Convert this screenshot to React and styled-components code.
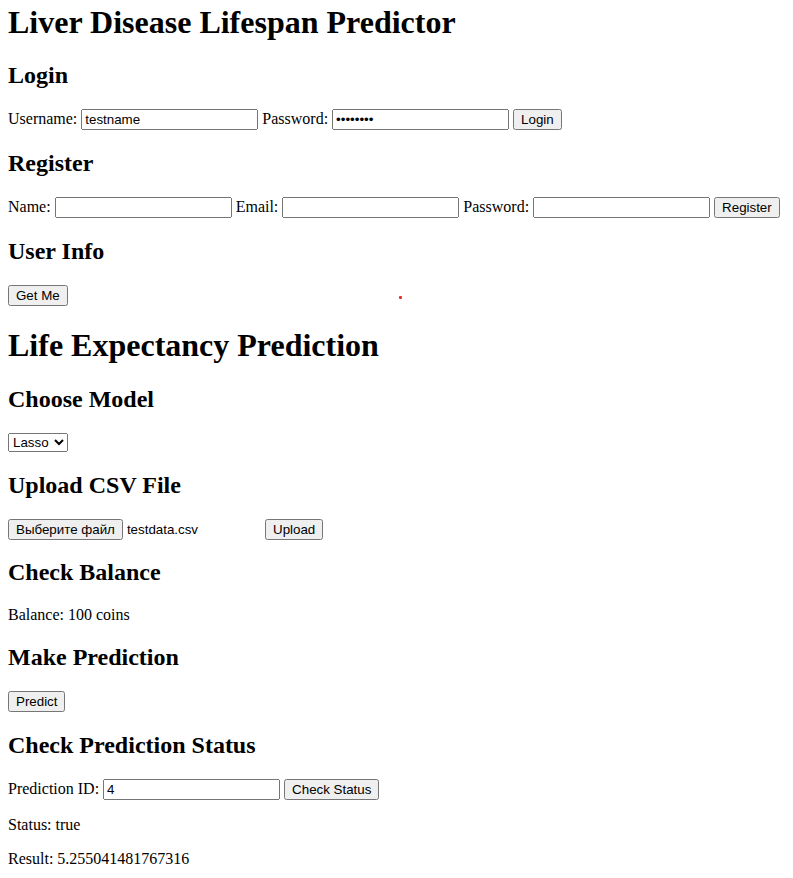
import React from 'react';
import styled, { createGlobalStyle } from 'styled-components';

const GlobalStyle = createGlobalStyle`
  body {
    margin: 8px;
    font-family: "Liberation Serif", "Times New Roman", serif;
    font-size: 16px;
    color: #000;
    background: #fff;
  }
`;

const Page = styled.div`
  position: relative;
`;

const Title = styled.h1`
  font-size: 32px;
  font-weight: bold;
  margin: 21.44px 0;

  &:first-child {
    margin-top: ${(p) => p.$offset || 0}px;
  }
`;

const Heading = styled.h2`
  font-size: 24px;
  font-weight: bold;
  margin: 19.92px 0;
`;

const Row = styled.p`
  margin: 16px 0;
  white-space: nowrap;
`;

const Control = styled.input`
  box-sizing: border-box;
  width: 177px;
  height: 21px;
  font-family: "Liberation Sans", Arial, sans-serif;
  font-size: 13.333px;
`;

const Button = styled.button`
  font-family: "Liberation Sans", Arial, sans-serif;
  font-size: 13.333px;
`;

const Select = styled.select`
  box-sizing: border-box;
  width: 60px;
  font-family: "Liberation Sans", Arial, sans-serif;
  font-size: 13.333px;
`;

const FilePicker = styled.span`
  display: inline-block;
  width: 253px;
  font-family: "Liberation Sans", Arial, sans-serif;
  font-size: 13.333px;
`;

const FileName = styled.span`
  margin-left: 4px;
`;

const Dot = styled.span`
  position: absolute;
  left: ${(p) => p.$x}px;
  top: ${(p) => p.$y}px;
  width: 3px;
  height: 3px;
  background: #e53030;
  border-radius: 1px;
`;

const App = () => (
  <Page>
    <GlobalStyle />
    <Title $offset={-4}>Liver Disease Lifespan Predictor</Title>

    <Heading>Login</Heading>
    <Row>
      Username: <Control type="text" defaultValue="testname" />{' '}
      Password: <Control type="password" defaultValue="password" />{' '}
      <Button>Login</Button>
    </Row>

    <Heading>Register</Heading>
    <Row>
      Name: <Control type="text" />{' '}
      Email: <Control type="email" />{' '}
      Password: <Control type="password" />{' '}
      <Button>Register</Button>
    </Row>

    <Heading>User Info</Heading>
    <Row>
      <Button>Get Me</Button>
    </Row>

    <Title>Life Expectancy Prediction</Title>

    <Heading>Choose Model</Heading>
    <Row>
      <Select defaultValue="lasso">
        <option value="lasso">Lasso</option>
        <option value="ridge">Ridge</option>
      </Select>
    </Row>

    <Heading>Upload CSV File</Heading>
    <Row>
      <FilePicker>
        <Button>Выберите файл</Button>
        <FileName>testdata.csv</FileName>
      </FilePicker>{' '}
      <Button>Upload</Button>
    </Row>

    <Heading>Check Balance</Heading>
    <Row>Balance: 100 coins</Row>

    <Heading>Make Prediction</Heading>
    <Row>
      <Button>Predict</Button>
    </Row>

    <Heading>Check Prediction Status</Heading>
    <Row>
      Prediction ID: <Control type="text" defaultValue="4" />{' '}
      <Button>Check Status</Button>
    </Row>
    <Row>Status: true</Row>
    <Row>Result: 5.255041481767316</Row>

    <Dot $x={391} $y={292} />
  </Page>
);

export default App;
